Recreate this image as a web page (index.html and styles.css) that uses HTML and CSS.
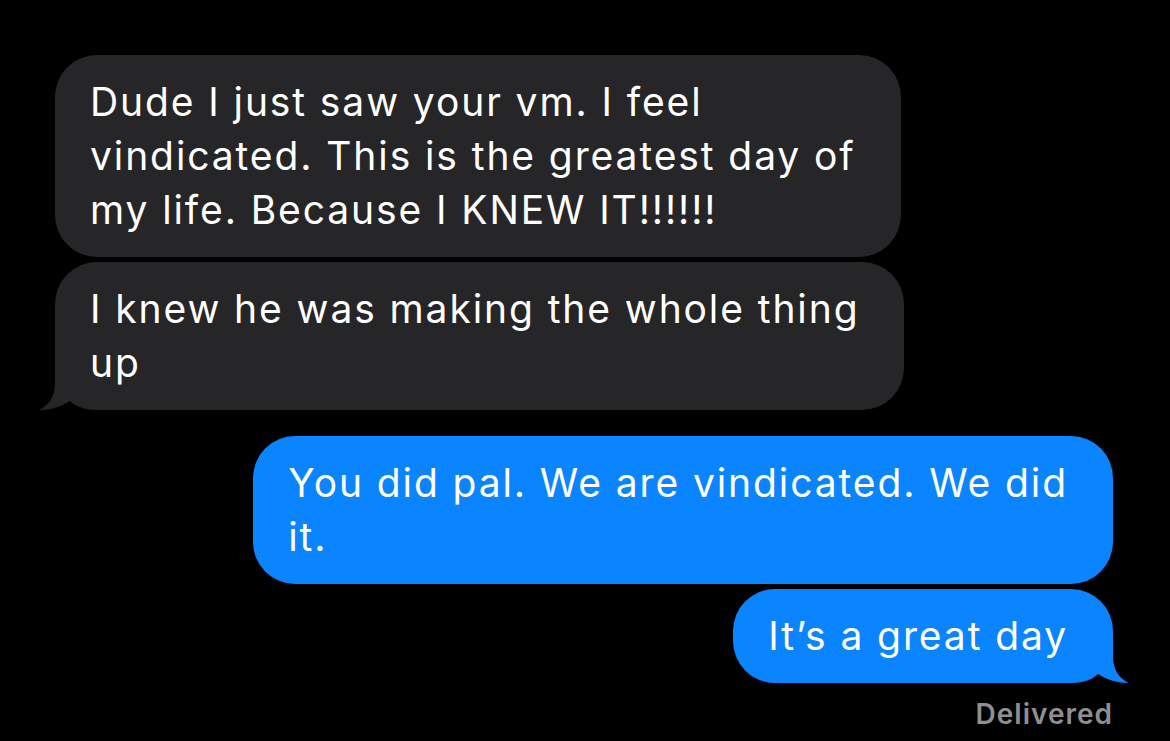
FILE: index.html
```html
<!DOCTYPE html>
<html lang="en">
<head>
    <meta charset="UTF-8">
    <meta name="viewport" content="width=device-width, initial-scale=1.0">
    <title>Messages</title>
    <link rel="stylesheet" href="styles.css">
</head>
<body>
    <div class="thread">
        <div class="group received">
            <div class="bubble"><span class="text">Dude I just saw your vm. I feel<br>vindicated. This is the greatest day of<br>my life. Because I KNEW IT!!!!!!</span></div>
            <div class="bubble last"><span class="text">I knew he was making the whole thing<br>up</span>
                <svg class="tail" viewBox="0 0 60 50" width="60" height="50">
                    <path d="M16 0 L16 24 C16 37 9 46 0 50 C11 50 22 47 31 41 C37 47 46 50 60 50 L60 0 Z" />
                </svg>
            </div>
        </div>

        <div class="group sent">
            <div class="bubble"><span class="text">You did pal. We are vindicated. We did<br>it.</span></div>
            <div class="bubble last"><span class="text">It’s a great day</span>
                <svg class="tail" viewBox="0 0 60 50" width="60" height="50">
                    <path d="M44 0 L44 24 C44 37 51 46 60 50 C49 50 38 47 29 41 C23 47 14 50 0 50 L0 0 Z" />
                </svg>
            </div>
            <div class="status">Delivered</div>
        </div>
    </div>
</body>
</html>
```

FILE: styles.css
```css
body {
    margin: 0;
    background: #000;
    font-family: Inter, "Liberation Sans", sans-serif;
    height: 100vh;
    overflow: hidden;
}

.thread {
    display: flex;
    flex-direction: column;
    gap: 26px;
    padding: 55px 57px 0 55px;
}

.group {
    display: flex;
    flex-direction: column;
    gap: 5px;
}

.received {
    align-items: flex-start;
}

.sent {
    align-items: flex-end;
}

.bubble {
    position: relative;
    font-size: 39px;
    line-height: 54px;
    letter-spacing: 1.9px;
    padding: 20px 45px 20px 35px;
    border-radius: 42px;
    color: #fff;
}

.text {
    position: relative;
    z-index: 1;
}

.received .bubble {
    background: #262628;
}

.sent .bubble {
    background: #0a84ff;
}

.tail {
    position: absolute;
    bottom: 0;
}

.received .tail {
    left: -16px;
    fill: #262628;
}

.sent .tail {
    right: -16px;
    fill: #0a84ff;
}

.status {
    color: #8e8e93;
    font-size: 28px;
    font-weight: 600;
    letter-spacing: 1px;
    margin-top: 9px;
}
```
